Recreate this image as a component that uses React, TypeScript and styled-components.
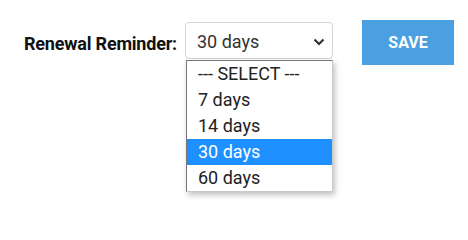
import styled, { createGlobalStyle } from 'styled-components';

const OPTIONS = ['--- SELECT ---', '7 days', '14 days', '30 days', '60 days'];
const SELECTED = '30 days';

const GlobalStyle = createGlobalStyle`
	html, body {
		margin: 0;
		padding: 0;
		background: #ffffff;
	}

	body {
		font-family: Roboto, 'Liberation Sans', sans-serif;
	}
`;

export default function App() {
	return (
		<>
			<GlobalStyle />
			<Row>
				<Label>Renewal Reminder:</Label>
				<SelectWrap>
					<SelectBox>
						<span>{SELECTED}</span>
						<svg width="12" height="8" viewBox="0 0 12 8">
							<polyline points="1.5,1.5 6,6 10.5,1.5" fill="none" stroke="#333" strokeWidth="2.2" />
						</svg>
					</SelectBox>
					<OptionList>
						{OPTIONS.map((option) => (
							<Option key={option} $active={option === SELECTED}>
								{option}
							</Option>
						))}
					</OptionList>
				</SelectWrap>
				<SaveButton>SAVE</SaveButton>
			</Row>
		</>
	);
}

const Row = styled.div`
	display: flex;
	align-items: flex-start;
	padding: 20px 0 0 24px;
	height: 181px;
`;

const Label = styled.label`
	margin: 11px 8px 0 0;
	width: 153px;

	font-size: 18px;
	font-weight: 700;
	line-height: 26px;
	letter-spacing: -0.2px;
	color: #111;
	white-space: nowrap;
`;

const SelectWrap = styled.div`
	position: relative;
	margin-top: 2px;
	width: 148px;
`;

const SelectBox = styled.div`
	box-sizing: border-box;
	height: 37px;
	padding: 2px 7px 0 11px;
	display: flex;
	align-items: center;
	justify-content: space-between;

	border: 1px solid #d4d4d4;
	border-radius: 4px;
	background: #fff;

	font-size: 18px;
	color: #333;

	svg {
		margin-top: 1px;
	}
`;

const OptionList = styled.ul`
	position: absolute;
	top: 38px;
	left: 1px;
	box-sizing: border-box;
	width: 147px;
	margin: 0;
	padding: 0;
	list-style: none;

	border: 1px solid #767676;
	border-right-color: #c8c8c8;
	border-bottom-color: #c8c8c8;
	background: #fff;
	box-shadow: 2px 3px 6px rgba(0, 0, 0, 0.25);
`;

const Option = styled.li<{ $active: boolean }>`
	height: 26px;
	padding-left: 11px;

	font-size: 18px;
	line-height: 26px;
	color: ${({ $active }) => ($active ? '#fff' : '#222')};
	background: ${({ $active }) => ($active ? '#1e90ff' : 'transparent')};
`;

const SaveButton = styled.button`
	margin-left: 29px;
	width: 92px;
	height: 45px;
	padding: 0;

	border: none;
	background: #4aa0e1;
	color: #fff;

	font-family: Roboto, 'Liberation Sans', sans-serif;
	font-size: 16px;
	font-weight: 700;
	cursor: pointer;
`;
